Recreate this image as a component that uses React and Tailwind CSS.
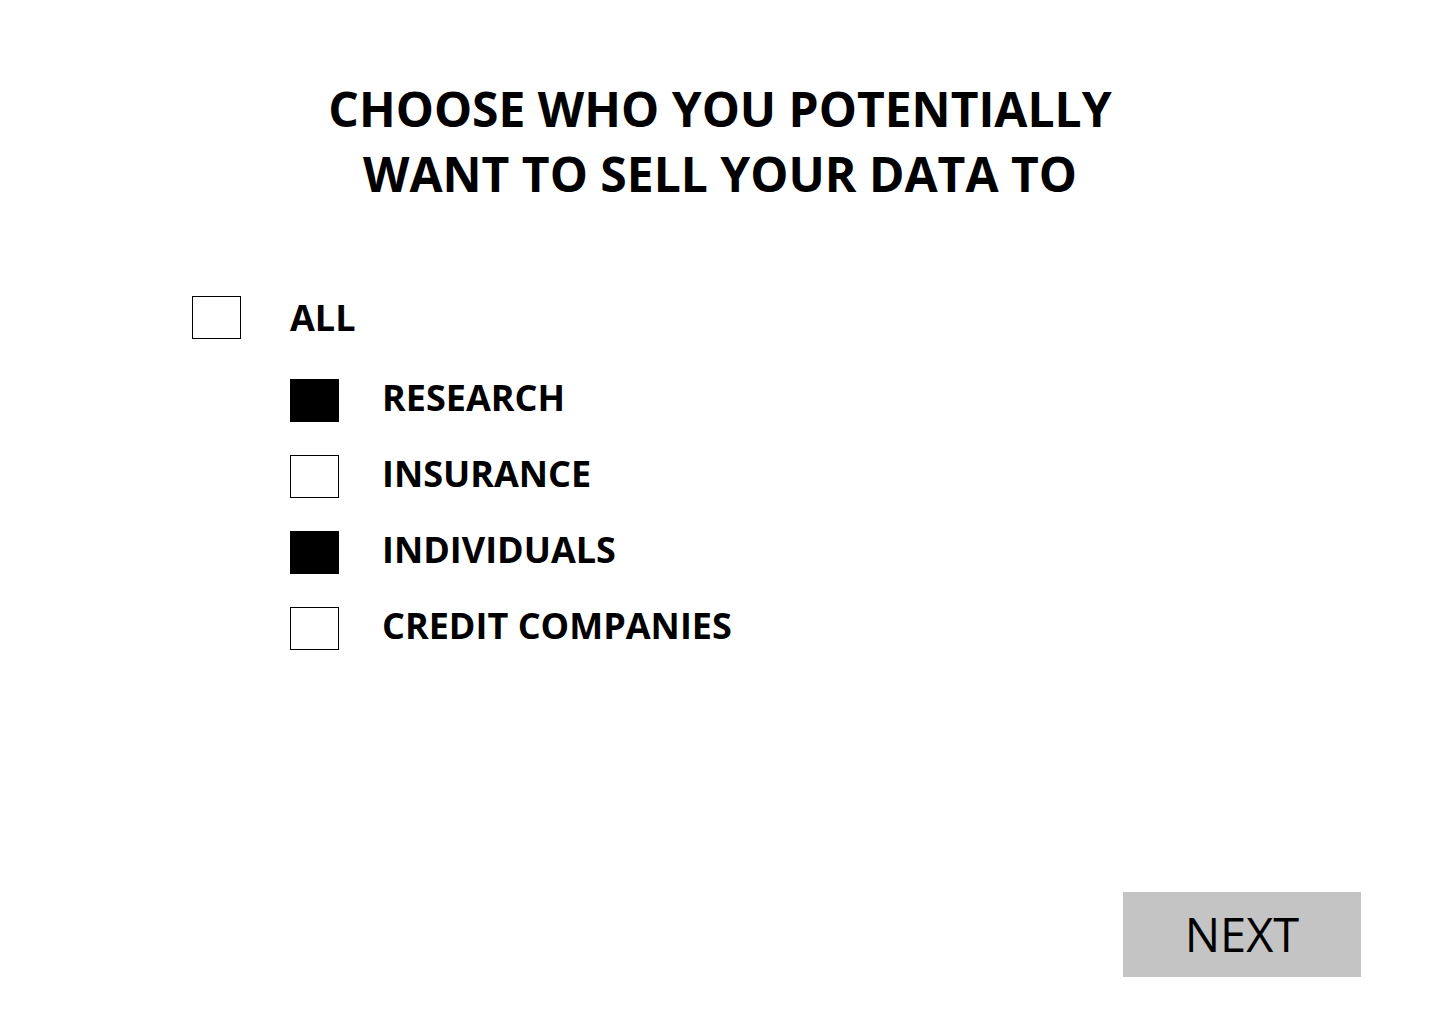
export default function App() {
  const items = [
    { label: "RESEARCH", checked: true, mt: "mt-[40px]" },
    { label: "INSURANCE", checked: false, mt: "mt-[33px]" },
    { label: "INDIVIDUALS", checked: true, mt: "mt-[33px]" },
    { label: "CREDIT COMPANIES", checked: false, mt: "mt-[33px]" },
  ];
  return (
    <div
      className="min-h-[1024px] w-full bg-white text-black flex flex-col"
      style={{ fontFamily: '"Open Sans", "Noto Sans", sans-serif' }}
    >
      <h1 className="pt-[76px] text-center text-[48px] leading-[65px] font-bold">
        CHOOSE WHO YOU POTENTIALLY
        <br />
        WANT TO SELL YOUR DATA TO
      </h1>

      <div className="mt-[90px] pl-[192px] flex flex-col">
        <div className="flex items-center h-[43px]">
          <div className="w-[49px] h-[43px] border border-black bg-white" />
          <span className="ml-[49px] text-[36px] font-bold leading-none">ALL</span>
        </div>
        <div className="pl-[98px] flex flex-col">
          {items.map((it) => (
            <div key={it.label} className={`flex items-center h-[43px] ${it.mt}`}>
              <div
                className={
                  it.checked
                    ? "w-[49px] h-[43px] border border-black bg-black"
                    : "w-[49px] h-[43px] border border-black bg-white"
                }
              />
              <span className="ml-[43px] mb-[6px] text-[36px] font-bold leading-none">{it.label}</span>
            </div>
          ))}
        </div>
      </div>

      <div className="mt-auto flex justify-end pr-[79px] pb-[47px]">
        <button className="w-[238px] h-[85px] bg-[#c4c4c4] flex items-center justify-center text-[47px] font-normal leading-none text-black">
          NEXT
        </button>
      </div>
    </div>
  );
}
